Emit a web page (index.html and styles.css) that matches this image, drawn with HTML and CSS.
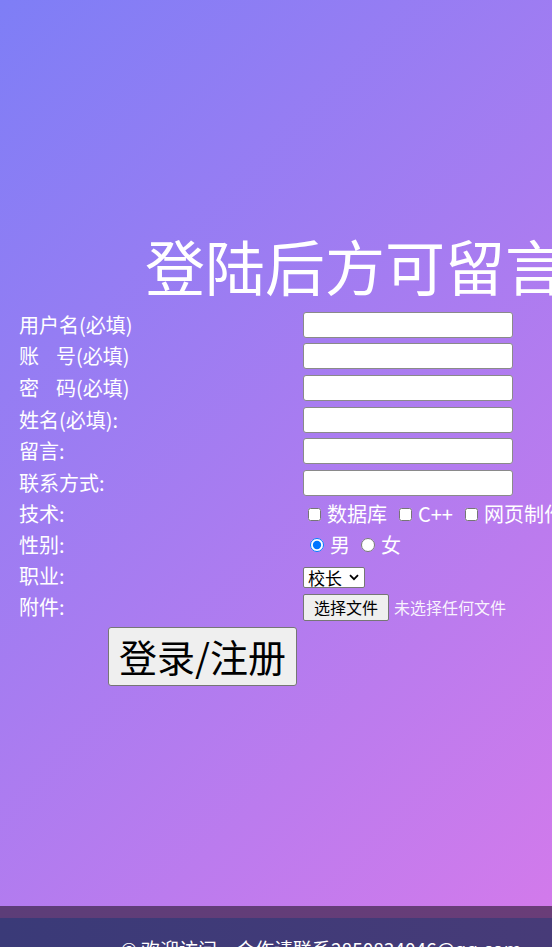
FILE: index.html
```html
<!DOCTYPE html>
<html lang="zh-CN">
<head>
<meta charset="utf-8">
<title>留言板登录</title>
<link rel="stylesheet" href="styles.css">
</head>
<body>
<div class="page">
  <h1 class="title">登陆后方可留言</h1>
  <form class="form">
    <div class="row"><span class="lbl">用户名(必填)</span><input class="txt" type="text"></div>
    <div class="row"><span class="lbl">账<span class="sp"></span>号(必填)</span><input class="txt" type="text"></div>
    <div class="row"><span class="lbl">密<span class="sp"></span>码(必填)</span><input class="txt" type="password"></div>
    <div class="row"><span class="lbl">姓名(必填):</span><input class="txt" type="text"></div>
    <div class="row"><span class="lbl">留言:</span><input class="txt" type="text"></div>
    <div class="row"><span class="lbl">联系方式:</span><input class="txt" type="text"></div>
    <div class="row row-s"><span class="lbl">技术:</span>
      <div class="opts checks">
        <label class="opt"><input type="checkbox" class="box">数据库</label>
        <label class="opt"><input type="checkbox" class="box">C++</label>
        <label class="opt"><input type="checkbox" class="box">网页制作</label>
      </div>
    </div>
    <div class="row row-s"><span class="lbl">性别:</span>
      <div class="opts radios">
        <label class="opt"><input type="radio" name="sex" class="rad" checked>男</label>
        <label class="opt"><input type="radio" name="sex" class="rad">女</label>
      </div>
    </div>
    <div class="row row-s"><span class="lbl">职业:</span>
      <div class="selwrap">
        <select class="sel"><option>校长</option><option>老师</option><option>学生</option></select>
        <svg class="chev" width="10" height="7" viewBox="0 0 10 7"><path d="M1 1.2 L5 5.2 L9 1.2" fill="none" stroke="#000" stroke-width="1.8"/></svg>
      </div>
    </div>
    <div class="row row-s"><span class="lbl">附件:</span>
      <div class="file"><button type="button" class="filebtn">选择文件</button><span class="filetxt">未选择任何文件</span></div>
    </div>
    <div class="submit-row"><button type="button" class="submit">登录/注册</button></div>
  </form>
</div>
<footer class="footer">
  <div class="band"></div>
  <div class="foot-main"><p class="foot-text">© 欢迎访问，合作请联系2850834046@qq.com</p></div>
</footer>
</body>
</html>
```
FILE: styles.css
```css
html, body {
  margin: 0;
  padding: 0;
}
body {
  width: 552px;
  overflow: hidden;
  font-family: "Noto Sans CJK SC", "Noto Sans", sans-serif;
  background: #3b3a78;
}
.page {
  height: 906px;
  box-sizing: border-box;
  background: linear-gradient(135deg, #7e7ef6 0%, #d27aeb 100%);
  padding-top: 235px;
  overflow: hidden;
  color: #fff;
}
.title {
  margin: 0;
  padding-left: 145px;
  font-size: 60px;
  line-height: 60px;
  font-weight: normal;
  white-space: nowrap;
}
.form {
  margin-top: 14px;
  padding-left: 19px;
}
.row {
  display: grid;
  grid-template-columns: 284px auto;
  align-items: center;
  height: 31.6px;
}
.row-s {
  height: 31px;
}
.lbl {
  font-size: 20px;
  line-height: 24px;
  white-space: nowrap;
}
.sp {
  display: inline-block;
  width: 17px;
}
.txt {
  width: 210px;
  height: 26px;
  box-sizing: border-box;
  margin: 0;
  border: 1px solid #8a8a8a;
  border-radius: 3px;
  background: #fff;
}
.opts {
  display: flex;
  align-items: center;
  white-space: nowrap;
  font-size: 20px;
  line-height: 24px;
}
.opt {
  display: flex;
  align-items: center;
}
.checks .opt { margin-right: 7px; }
.checks .box { margin: 0 6px 0 5px; width: 13px; height: 13px; }
.radios .opt { margin-right: 4px; }
.radios .rad { margin: 0 6px 0 7px; width: 14px; height: 14px; }
.selwrap {
  position: relative;
  width: 62px;
  height: 21px;
}
.sel {
  -webkit-appearance: none;
  appearance: none;
  width: 62px;
  height: 21px;
  box-sizing: border-box;
  margin: 0;
  font-family: "Noto Sans CJK SC", sans-serif;
  font-size: 17px;
  padding: 0 0 0 4px;
  color: #000;
  background: #fff;
  border: 1px solid #767676;
  border-radius: 2px;
  line-height: 19px;
}
.chev {
  position: absolute;
  right: 6px;
  top: 8px;
  pointer-events: none;
}
.file {
  display: flex;
  align-items: center;
  white-space: nowrap;
}
.filebtn {
  width: 86px;
  height: 27px;
  box-sizing: border-box;
  padding: 0;
  font-family: "Noto Sans CJK SC", sans-serif;
  font-size: 16px;
  color: #000;
  background: #efefef;
  border: 1px solid #767676;
  border-radius: 2px;
}
.filetxt {
  margin-left: 5px;
  font-size: 16px;
  color: rgba(255, 255, 255, 0.92);
}
.submit-row {
  padding-left: 89px;
  padding-top: 4px;
}
.submit {
  width: 189px;
  height: 59px;
  box-sizing: border-box;
  padding: 0;
  font-family: "Noto Sans CJK SC", sans-serif;
  font-size: 38px;
  line-height: 1;
  color: #000;
  background: #efefef;
  border: 1px solid #767676;
  border-radius: 3px;
}
.footer {
  height: 41px;
  overflow: hidden;
}
.band {
  height: 12px;
  background: linear-gradient(90deg, #5c3d78, #6a3d78);
}
.foot-main {
  height: 29px;
  background: linear-gradient(90deg, #3a3a78, #473b78);
  overflow: visible;
}
.foot-text {
  margin: 0;
  padding: 19px 0 0 121px;
  color: #fff;
  font-size: 19px;
  line-height: 24px;
  white-space: nowrap;
}
```
